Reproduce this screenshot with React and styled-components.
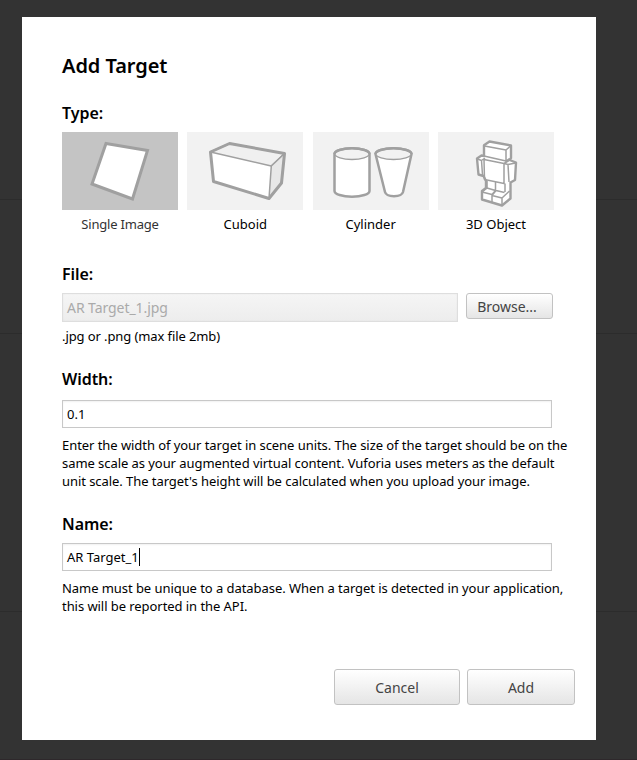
import React from 'react';
import styled, { createGlobalStyle } from 'styled-components';

const GlobalStyle = createGlobalStyle`
  * { box-sizing: border-box; }
  body { margin: 0; background: #333; font-family: 'Noto Sans', sans-serif; color: #000; }
  h1, h2, p { margin: 0; }
`;

const Backdrop = styled.div`
  height: 760px;
  padding: 17px 41px 20px 22px;
  overflow: hidden;
  background:
    linear-gradient(#2c2c2c, #2c2c2c) 0 199px / 100% 1px no-repeat,
    linear-gradient(#2c2c2c, #2c2c2c) 0 333px / 100% 1px no-repeat,
    linear-gradient(#2c2c2c, #2c2c2c) 0 611px / 100% 1px no-repeat,
    linear-gradient(#2e282b, #2e282b) 0 759px / 100% 1px no-repeat,
    #333;
`;

const Dialog = styled.main`
  display: flex;
  flex-direction: column;
  width: 574px;
  height: 723px;
  padding: 34px 21px 35px 40px;
  background: #fff;
`;

const Title = styled.h1`
  height: 30px;
  font-size: 20px;
  font-weight: 600;
  line-height: 30px;
  letter-spacing: -0.06px;
`;

const Section = styled.section`
  margin-top: ${(p) => p.$gap}px;
`;

const Label = styled.h2`
  height: 24px;
  margin-bottom: ${(p) => p.$space}px;
  font-size: 16px;
  font-weight: 600;
  line-height: 24px;
  letter-spacing: -0.05px;
`;

const Types = styled.div`
  display: grid;
  grid-template-columns: 116px 116px 116px 116px;
  column-gap: 9.33px;
`;

const TypeOption = styled.div`
  color: ${(p) => (p.$selected ? '#333' : '#000')};
  font-size: 13px;
  line-height: 18px;
  letter-spacing: ${(p) => (p.$selected ? '-0.2px' : '0')};
  text-align: center;
`;

const Tile = styled.div`
  height: 78px;
  margin-bottom: 5px;
  background: ${(p) => (p.$selected ? '#c4c4c4' : '#f2f2f2')};
`;

const Drawing = styled.svg`
  display: block;
  fill: #fff;
  stroke: #a0a0a0;
  stroke-width: 3;
  stroke-linejoin: round;
`;

const FileRow = styled.div`
  display: flex;
  gap: 8px;
`;

const Field = styled.div`
  display: flex;
  align-items: center;
  width: 490px;
  height: 28px;
  padding-left: 4px;
  border: 1px solid #c8c8c8;
  background: #fff;
  box-shadow: inset 0 1px 2px rgba(0, 0, 0, 0.06);
  font-size: 13px;
`;

const FileField = styled(Field)`
  width: 396px;
  height: 29px;
  border-color: #dedede;
  background: linear-gradient(#f5f5f5, #ededed);
  box-shadow: inset 0 0 2px rgba(0, 0, 0, 0.06);
  color: #aaa;
  font-size: 14px;
  letter-spacing: -0.07px;
`;

const Caret = styled.span`
  width: 1px;
  height: 18px;
  background: #000;
`;

const Button = styled.button`
  width: ${(p) => p.$w}px;
  height: ${(p) => p.$h}px;
  padding: 0;
  border: 1px solid #c2c2c2;
  border-radius: 3px;
  background: linear-gradient(#fff, #e5e5e5);
  color: #444;
  font: 14px 'Noto Sans', sans-serif;
`;

const BrowseButton = styled(Button)`
  padding-right: 5px;
`;

const Hint = styled.p`
  margin-top: ${(p) => p.$space}px;
  font-size: 13px;
  line-height: 18px;
  letter-spacing: ${(p) => p.$tracking ?? -0.06}px;
  white-space: nowrap;
`;

const Actions = styled.footer`
  display: flex;
  justify-content: flex-end;
  gap: 7px;
  margin-top: auto;
`;

const ImageShape = () => <path d="M44 11.5 85.500 18.500 70.500 67 30 52Z" strokeLinejoin="miter" />;

const CuboidShape = () => (
  <>
    <path d="M23.500 20 42.500 11.500 84.300 34 82 66.500 26.500 49.500Z" stroke="none" />
    <path d="M23.500 20 42.500 11.500 97.500 21.500 84.300 34Z" fill="#f0f0f0" strokeWidth="1.5" />
    <path d="M84.300 34 97.500 21.500 94.500 51 82 66.500Z" fill="#e8e8e8" strokeWidth="1.5" />
    <path d="M23.500 20 42.500 11.500 97.500 21.500 94.500 51 82 66.500 26.500 49.500Z" fill="none" />
  </>
);

const CylinderShape = () => (
  <>
    <path d="M21.500 22A17.500 5.700 0 0 1 56.500 22V59A17.500 5.700 0 0 1 21.500 59Z" strokeWidth="2.5" />
    <path d="M22 22A17 5.500 0 0 1 56 22A17 5.500 0 0 1 22 22Z" fill="#f2f2f2" strokeWidth="1.3" />
    <path d="M21.500 22A17.500 5.700 0 0 1 56.500 22" fill="none" strokeWidth="2.5" />
    <path d="M62.500 22A18 5.700 0 0 1 98.500 22L90 60C88.500 65.500 73.500 65.500 72 60Z" strokeWidth="2.5" />
    <path d="M63 22A17.500 5.500 0 0 1 98 22A17.500 5.500 0 0 1 63 22Z" fill="#f2f2f2" strokeWidth="1.3" />
    <path d="M62.500 22A18 5.700 0 0 1 98.500 22" fill="none" strokeWidth="2.5" />
  </>
);

const RobotShape = () => (
  <>
    <path
      d="M46 13.300 51.500 9.500 73 13.500V26L71.500 28 78 30.500 77 48 72.500 50.500V66.500L64 73.500 44 67.500V59L48 56V49L45.500 44 40.500 42.500 39 26.500 43.500 23.500 46 24Z"
      strokeWidth="2.4"
    />
    <path
      d="M46.500 14 68 18V29M68 18 72.500 14M46 24 68 29 71.500 26.500M46 27.500 66 31.500 71 28.500M46 27.500 46.500 47.500 66 51.500V31.500M39.500 27 43.500 28.500 47 26M43.500 28.500 44.500 43M70 32.500 77.500 31M70 32.500 71 50M66 31.500 70 32.500M49 49V56M57.500 50.500V58M67 51.500V60M44 60 54 62.500V70.500M44 60 49 56 57.500 58.500 54 62.500M54 63.500 64 66V73M54 63.500 58 58.500 66.500 60.500M64 66 71.500 59"
      fill="none"
      strokeWidth="1.5"
    />
  </>
);

const TYPES = [
  { name: 'Single Image', Shape: ImageShape, selected: true },
  { name: 'Cuboid', Shape: CuboidShape },
  { name: 'Cylinder', Shape: CylinderShape },
  { name: '3D Object', Shape: RobotShape },
];

export default function App() {
  return (
    <Backdrop>
      <GlobalStyle />
      <Dialog>
        <Title>Add Target</Title>
        <Section $gap={20}>
          <Label $space={7}>Type:</Label>
          <Types>
            {TYPES.map(({ name, Shape, selected }) => (
              <TypeOption key={name} $selected={selected}>
                <Tile $selected={selected}>
                  <Drawing width="116" height="78" viewBox="0 0 116 78"><Shape /></Drawing>
                </Tile>
                {name}
              </TypeOption>
            ))}
          </Types>
        </Section>
        <Section $gap={29}>
          <Label $space={7}>File:</Label>
          <FileRow>
            <FileField>AR Target_1.jpg</FileField>
            <BrowseButton $w={87} $h={26}>Browse...</BrowseButton>
          </FileRow>
          <Hint $space={5} $tracking={-0.1}>.jpg or .png (max file 2mb)</Hint>
        </Section>
        <Section $gap={22}>
          <Label $space={9}>Width:</Label>
          <Field>0.1</Field>
          <Hint $space={8}>
            Enter the width of your target in scene units. The size of the target should be on the<br />
            same scale as your augmented virtual content. Vuforia uses meters as the default<br />
            unit scale. The target's height will be calculated when you upload your image.
          </Hint>
        </Section>
        <Section $gap={22}>
          <Label $space={7}>Name:</Label>
          <Field>AR Target_1<Caret /></Field>
          <Hint $space={8}>
            Name must be unique to a database. When a target is detected in your application,<br />
            this will be reported in the API.
          </Hint>
        </Section>
        <Actions>
          <Button $w={126} $h={36}>Cancel</Button>
          <Button $w={108} $h={36}>Add</Button>
        </Actions>
      </Dialog>
    </Backdrop>
  );
}
